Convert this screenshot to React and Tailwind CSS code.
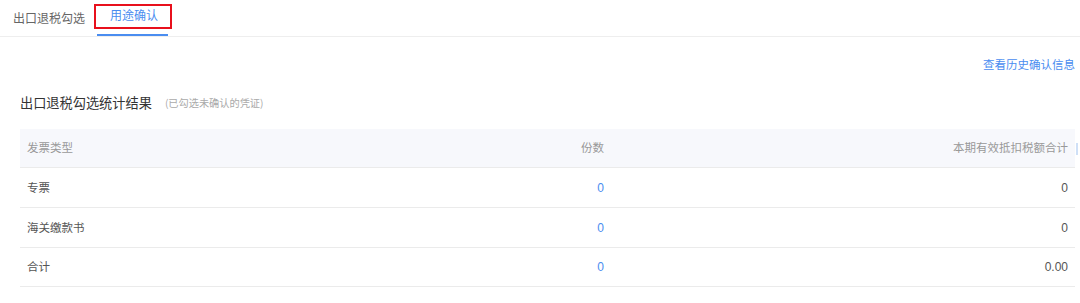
const ROWS = [
  { name: '专票', count: '0', amount: '0' },
  { name: '海关缴款书', count: '0', amount: '0' },
  { name: '合计', count: '0', amount: '0.00' },
];

export default function App() {
  return (
    <div
      className="h-[303px] w-[1080px] overflow-hidden bg-white"
      style={{ fontFamily: '"Noto Sans CJK SC", "Noto Sans", sans-serif' }}
    >
      {/* tabs */}
      <div className="flex h-[37px] items-end border-b border-[#eeeeee]">
        <div className="flex h-[36px] items-center pl-[13px] pr-[9px] text-[12px] text-[#666666]">
          出口退税勾选
        </div>
        <div className="relative flex h-[36px] w-[80px] flex-col items-center">
          <div className="absolute left-0 top-[4px] h-[25px] w-[78px] border-2 border-[#e8101c]" />
          <div className="flex h-[34px] w-[78px] items-center justify-center pb-[4px] text-[12px] text-[#4a8df0]">
            用途确认
          </div>
          <div className="ml-[3px] h-[2px] w-[71px] self-start bg-[#4a8df0]" />
        </div>
      </div>

      <div className="pl-[20px] pr-[5px]">
        <div className="flex h-[42px] items-end justify-end pb-[6px]">
          <span className="text-[11.5px] text-[#4a8df0]">查看历史确认信息</span>
        </div>

        <div className="flex h-[50px] items-center pb-[3px]">
          <span className="text-[13.2px] text-[#333333]">出口退税勾选统计结果</span>
          <span className="ml-[13px] text-[10.2px] text-[#aaaaaa]">(已勾选未确认的凭证)</span>
        </div>

        <div className="relative">
          <div className="flex h-[38px] items-center bg-[#f7f8fc] text-[11.5px] text-[#999999]">
            <div className="w-[300px] pl-[7px]">发票类型</div>
            <div className="w-[284px] text-right">份数</div>
            <div className="flex-1 pr-[7px] text-right">本期有效抵扣税额合计</div>
          </div>
          <div className="absolute right-[-3px] top-[14px] h-[12px] w-[2px] bg-[#cfe0f7]" />
          {ROWS.map((r) => (
            <div
              key={r.name}
              className="flex h-[40px] items-center border-t border-[#ebebeb] text-[11.5px] text-[#555555] last:border-b"
            >
              <div className="w-[300px] pl-[7px]">{r.name}</div>
              <div
                className="w-[284px] text-right text-[12px] text-[#4a8df0]"
                style={{ fontFamily: '"Liberation Sans", Arial, sans-serif' }}
              >
                {r.count}
              </div>
              <div
                className="flex-1 pr-[7px] text-right text-[12px]"
                style={{ fontFamily: '"Liberation Sans", Arial, sans-serif' }}
              >
                {r.amount}
              </div>
            </div>
          ))}
        </div>
      </div>
    </div>
  );
}
